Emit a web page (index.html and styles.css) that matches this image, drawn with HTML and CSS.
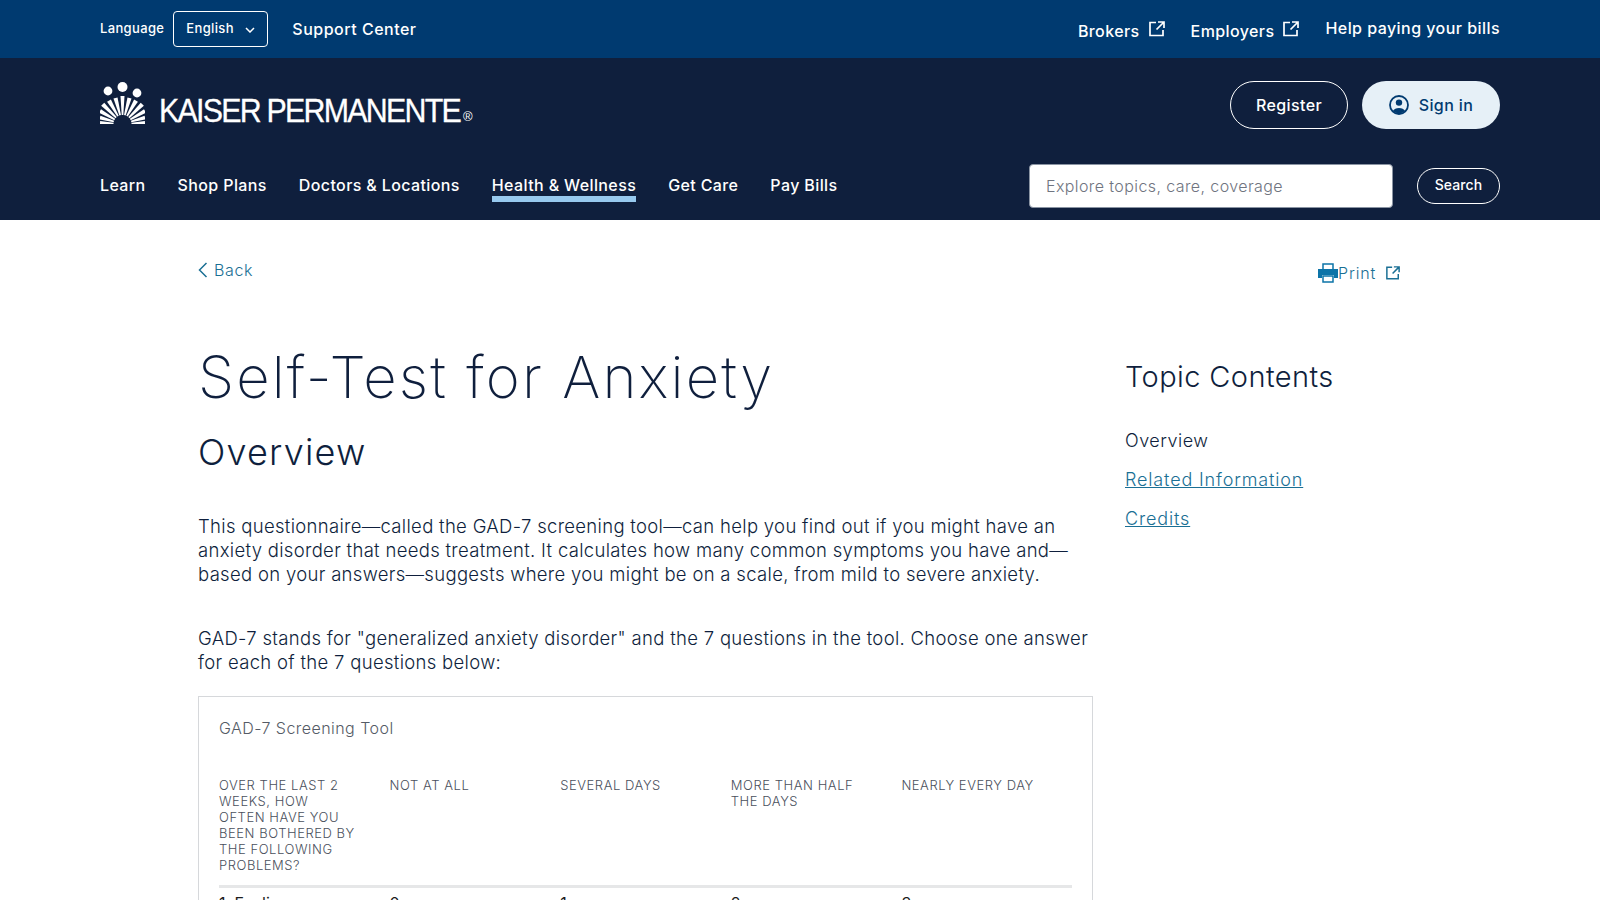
FILE: index.html
```html
<!DOCTYPE html>
<html lang="en">
<head>
    <meta charset="UTF-8">
    <title>Self-Test for Anxiety</title>
    <link rel="stylesheet" href="styles.css">
</head>
<body>
    <header>
        <div class="topbar">
            <div class="topbar-left">
                <span class="lang-label">Language</span>
                <span class="lang-select">English
                    <svg width="10" height="6" viewBox="0 0 10 6"><path d="M1 1l4 4 4-4" fill="none" stroke="#fff" stroke-width="1.5"/></svg>
                </span>
                <a class="support">Support Center</a>
            </div>
            <div class="topbar-right">
                <a class="ext">Brokers
                    <svg class="ext-icon" width="16" height="16" viewBox="0 0 16 16"><path d="M7 1.5H1v13h13V9M9 1h6v6M15 1L7.5 8.5" fill="none" stroke="#fff" stroke-width="1.7"/></svg>
                </a>
                <a class="ext">Employers
                    <svg class="ext-icon" width="16" height="16" viewBox="0 0 16 16"><path d="M7 1.5H1v13h13V9M9 1h6v6M15 1L7.5 8.5" fill="none" stroke="#fff" stroke-width="1.7"/></svg>
                </a>
                <a class="help">Help paying your bills</a>
            </div>
        </div>
        <div class="mainbar">
            <div class="brand-row">
                <div class="logo">
                    <svg width="45" height="42" viewBox="0 0 45 42">
                        <circle cx="8" cy="9" r="4.4" fill="#fff"/>
                        <circle cx="22.5" cy="5" r="5" fill="#fff"/>
                        <circle cx="37" cy="11" r="4.4" fill="#fff"/>
                        <g fill="#fff" transform="translate(22.5 42)">
                            <polygon points="-0.8,-9 0.8,-9 2,-28 -2,-28"/>
                            <polygon points="-0.8,-9 0.8,-9 2.1,-27 -2.1,-27" transform="rotate(-15)"/>
                            <polygon points="-0.8,-9 0.8,-9 2.1,-27 -2.1,-27" transform="rotate(15)"/>
                            <polygon points="-0.8,-9 0.8,-9 2.2,-27 -2.2,-27" transform="rotate(-30)"/>
                            <polygon points="-0.8,-9 0.8,-9 2.2,-27 -2.2,-27" transform="rotate(30)"/>
                            <polygon points="-0.8,-9 0.8,-9 2.2,-28 -2.2,-28" transform="rotate(-45)"/>
                            <polygon points="-0.8,-9 0.8,-9 2.2,-28 -2.2,-28" transform="rotate(45)"/>
                            <polygon points="-0.8,-9 0.8,-9 2,-26 -2,-26" transform="rotate(-60)"/>
                            <polygon points="-0.8,-9 0.8,-9 2,-26 -2,-26" transform="rotate(60)"/>
                            <polygon points="-0.8,-9 0.8,-9 1.9,-23.5 -1.9,-23.5" transform="rotate(-74)"/>
                            <polygon points="-0.8,-9 0.8,-9 1.9,-23.5 -1.9,-23.5" transform="rotate(74)"/>
                            <polygon points="-0.8,-9 0.8,-9 1.8,-22.5 -1.8,-22.5" transform="rotate(-87)"/>
                            <polygon points="-0.8,-9 0.8,-9 1.8,-22.5 -1.8,-22.5" transform="rotate(87)"/>
                        </g>
                    </svg>
                    <span class="logo-name">KAISER PERMANENTE</span><span class="logo-reg">®</span>
                </div>
                <div class="account">
                    <a class="btn-register">Register</a>
                    <a class="btn-signin">
                        <svg width="20" height="20" viewBox="0 0 20 20">
                            <circle cx="10" cy="10" r="9" fill="none" stroke="#003a70" stroke-width="1.8"/>
                            <circle cx="10" cy="7.6" r="3.2" fill="#003a70"/>
                            <path d="M3.8 16a7 5.4 0 0 1 12.4 0A9 9 0 0 1 3.8 16z" fill="#003a70"/>
                        </svg>
                        Sign in
                    </a>
                </div>
            </div>
            <div class="nav-row">
                <nav>
                    <a>Learn</a>
                    <a>Shop Plans</a>
                    <a>Doctors &amp; Locations</a>
                    <a class="active">Health &amp; Wellness</a>
                    <a>Get Care</a>
                    <a>Pay Bills</a>
                </nav>
                <div class="search">
                    <input type="text" placeholder="Explore topics, care, coverage">
                    <button>Search</button>
                </div>
            </div>
        </div>
    </header>

    <div class="page">
        <div class="tools">
            <a class="back">
                <svg width="10" height="16" viewBox="0 0 10 16"><path d="M8.5 1L1.5 8l7 7" fill="none" stroke="#1a6f94" stroke-width="1.5"/></svg>
                Back
            </a>
            <a class="print">
                <svg width="20" height="20" viewBox="0 0 20 20">
                    <path d="M5 7V1h10v6M5 13v6h10v-6z" fill="#fff" stroke="#0d74a8" stroke-width="1.5"/>
                    <path d="M0 6h20v9h-4v-3H4v3H0z" fill="#0d74a8"/>
                </svg>Print
                <svg class="print-ext" width="14" height="14" viewBox="0 0 16 16"><path d="M7 1.5H1v13h13V9M9 1h6v6M15 1L7.5 8.5" fill="none" stroke="#1a6f94" stroke-width="1.7"/></svg>
            </a>
        </div>

        <div class="columns">
            <main>
                <h1>Self-Test for Anxiety</h1>
                <h2>Overview</h2>
                <p class="para-first">This questionnaire—called the GAD-7 screening tool—can help you find out if you might have an anxiety disorder that needs treatment. It calculates how many common symptoms you have and—based on your answers—suggests where you might be on a scale, from mild to severe anxiety.</p>
                <p class="para-second">GAD-7 stands for "generalized anxiety disorder" and the 7 questions in the tool. Choose one answer for each of the 7 questions below:</p>

                <div class="tool-box">
                    <div class="tool-title">GAD-7 Screening Tool</div>
                    <table>
                        <thead>
                            <tr>
                                <th>Over the last 2<br>weeks, how<br>often have you<br>been bothered by<br>the following<br>problems?</th>
                                <th>Not at all</th>
                                <th>Several days</th>
                                <th>More than half the days</th>
                                <th>Nearly every day</th>
                            </tr>
                        </thead>
                        <tbody>
                            <tr>
                                <td>1. Feeling nervous, anxious, or on edge</td>
                                <td>0</td>
                                <td>1</td>
                                <td>2</td>
                                <td>3</td>
                            </tr>
                        </tbody>
                    </table>
                </div>
            </main>

            <aside>
                <h3>Topic Contents</h3>
                <div class="toc-current">Overview</div>
                <a class="toc-link">Related Information</a>
                <a class="toc-link">Credits</a>
            </aside>
        </div>
    </div>
</body>
</html>
```

FILE: styles.css
```css
* {
    margin: 0;
    padding: 0;
    box-sizing: border-box;
}

body {
    font-family: Inter, "Open Sans", sans-serif;
    background-color: #fff;
    color: #0f1f3d;
    height: 900px;
    overflow: hidden;
}

/* header */
.topbar {
    height: 58px;
    background-color: #003a70;
    color: #fff;
    padding: 0 100px;
    display: flex;
    justify-content: space-between;
    align-items: center;
}

.topbar-left,
.topbar-right {
    display: flex;
    align-items: center;
}

.lang-label {
    font-size: 13px;
    font-weight: 500;
    letter-spacing: 0.35px;
    margin-right: 9px;
    margin-top: -2px;
}

.lang-select {
    width: 95px;
    height: 36px;
    border: 1px solid #fff;
    border-radius: 4px;
    padding: 0 12px;
    display: flex;
    align-items: center;
    justify-content: space-between;
    font-size: 13px;
    font-weight: 500;
    letter-spacing: 0.35px;
    padding-bottom: 3px;
    margin-right: 24px;
}

.lang-select svg {
    margin-top: 5px;
}

.support {
    font-size: 16px;
    font-weight: 500;
    letter-spacing: 0.5px;
    margin-top: -1px;
}

.ext {
    display: flex;
    align-items: center;
    font-size: 16px;
    font-weight: 500;
    letter-spacing: 0.4px;
    margin-right: 26px;
    margin-top: 3px;
}

.ext-icon {
    margin-left: 9px;
    margin-top: -3px;
}

.help {
    font-size: 16px;
    font-weight: 500;
    letter-spacing: 0.45px;
    margin-top: -2px;
}

.mainbar {
    height: 162px;
    background-color: #0f1f3d;
    color: #fff;
    padding: 23px 100px 0;
}

.brand-row {
    display: flex;
    justify-content: space-between;
    height: 48px;
}

.logo {
    display: flex;
    align-items: flex-end;
    height: 44px;
    margin-top: -1px;
}

.logo-name {
    font-family: "Liberation Sans", sans-serif;
    font-size: 33px;
    line-height: 28px;
    margin-left: 14px;
    margin-right: -26px;
    margin-bottom: -1px;
    letter-spacing: -1.9px;
    -webkit-text-stroke: 0.3px #fff;
    transform: scaleX(0.92);
    transform-origin: left center;
}

.logo-reg {
    font-family: "Liberation Sans", sans-serif;
    font-size: 13px;
    line-height: 15px;
    margin-left: 3px;
}

.account {
    display: flex;
    gap: 14px;
}

.btn-register,
.btn-signin {
    height: 48px;
    border-radius: 24px;
    display: flex;
    align-items: center;
    justify-content: center;
    font-size: 16px;
    font-weight: 500;
    letter-spacing: 0.4px;
}

.btn-register {
    width: 118px;
    border: 1px solid #fff;
}

.btn-signin {
    width: 138px;
    background-color: #e6f0f7;
    color: #003a70;
    gap: 10px;
}

.nav-row {
    display: flex;
    justify-content: space-between;
    margin-top: 35px;
}

nav {
    display: flex;
    gap: 32px;
    padding-top: 10px;
}

nav a {
    font-size: 16px;
    font-weight: 500;
    letter-spacing: 0.38px;
    height: 28px;
    line-height: 22px;
}

nav a.active {
    border-bottom: 6px solid #97c9ee;
}

.search {
    display: flex;
    align-items: center;
    gap: 24px;
}

.search input {
    width: 364px;
    height: 44px;
    border: 1px solid #8a94a3;
    border-radius: 4px;
    padding: 0 16px;
    font-family: inherit;
    font-size: 16px;
    font-weight: 300;
    letter-spacing: 0.4px;
}

.search input::placeholder {
    color: #6f7480;
    opacity: 1;
}

.search button {
    width: 83px;
    height: 36px;
    background: none;
    border: 1px solid #fff;
    border-radius: 18px;
    color: #fff;
    font-family: inherit;
    font-size: 14px;
    font-weight: 500;
    letter-spacing: 0.1px;
    padding-bottom: 4px;
}

/* content */
.page {
    padding: 0 200px 0 198px;
}

.tools {
    display: flex;
    justify-content: space-between;
    padding-top: 40px;
    height: 123px;
}

.back {
    display: flex;
    align-items: center;
    gap: 6px;
    height: 20px;
    font-size: 16px;
    font-weight: 300;
    letter-spacing: 0.6px;
    color: #1a6f94;
}

.print {
    display: flex;
    align-items: center;
    height: 24px;
    margin-top: 1px;
    font-size: 16px;
    font-weight: 300;
    letter-spacing: 0.8px;
    color: #1a6f94;
}

.print-ext {
    margin-left: 10px;
}

.columns {
    display: flex;
}

main {
    width: 895px;
    flex-shrink: 0;
}

h1 {
    font-size: 58px;
    font-weight: 200;
    line-height: 68px;
    letter-spacing: 2.1px;
}

h2 {
    font-size: 36px;
    font-weight: 300;
    line-height: 42px;
    letter-spacing: 1.2px;
    margin-top: 20px;
}

.para-first,
.para-second {
    font-size: 18.5px;
    font-weight: 300;
    line-height: 24px;
    letter-spacing: 0.31px;
}

.para-first {
    margin-top: 41px;
}

.para-second {
    margin-top: 40px;
}

.tool-box {
    margin-top: 22px;
    border: 1px solid #d6d8db;
    padding: 19px 20px 0;
    height: 300px;
}

.tool-title {
    font-size: 16px;
    font-weight: 300;
    letter-spacing: 0.45px;
    color: #555b66;
    line-height: 24px;
}

table {
    width: 100%;
    margin-top: 37px;
    border-collapse: collapse;
    table-layout: fixed;
}

th {
    text-align: left;
    vertical-align: top;
    font-size: 13px;
    font-weight: 300;
    letter-spacing: 0.55px;
    line-height: 16px;
    text-transform: uppercase;
    color: #4a505c;
    padding: 0 24px 12px 0;
    border-bottom: 3px solid #e6e7e8;
}

td {
    padding-top: 5px;
    font-size: 16px;
    font-weight: 400;
    vertical-align: top;
    color: #1c1c1c;
}

aside {
    margin-left: 32px;
    padding-top: 16px;
}

h3 {
    font-size: 29px;
    font-weight: 300;
    letter-spacing: 0.4px;
    line-height: 36px;
    margin-bottom: 34px;
}

.toc-current,
.toc-link {
    display: block;
    font-size: 18px;
    font-weight: 300;
    line-height: 24px;
    margin-bottom: 15px;
}

.toc-current {
    letter-spacing: 0.5px;
}

.toc-link {
    color: #1a6f94;
    letter-spacing: 0.85px;
    text-decoration: underline;
}
```
